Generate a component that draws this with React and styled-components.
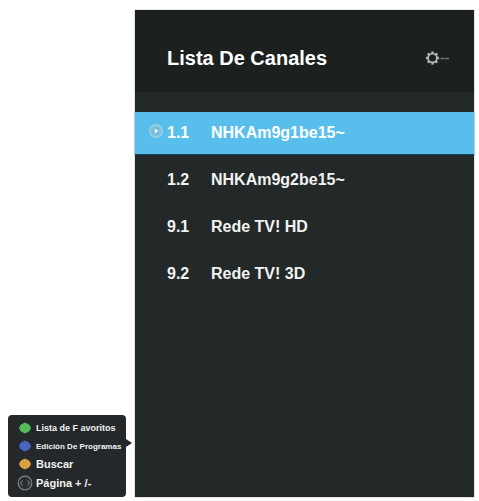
import React from "react";
import styled, { createGlobalStyle } from "styled-components";

const GlobalStyle = createGlobalStyle`
  * { box-sizing: border-box; }
  body {
    margin: 0;
    background: #fff;
    color: #f1f3f3;
    font-family: "Liberation Sans", Arial, sans-serif;
    font-weight: 700;
  }
  button {
    margin: 0;
    padding: 0;
    border: 0;
    background: none;
    color: inherit;
    font: inherit;
    text-align: left;
    cursor: pointer;
  }
`;

const Page = styled.main`
  display: grid;
  grid-template-columns: 126px 1fr;
  column-gap: 9px;
  min-height: 100vh;
  padding: 10px 5px 4px 0;
`;

const Legend = styled.aside`
  position: relative;
  align-self: end;
  display: flex;
  flex-direction: column;
  margin-left: 8px;
  padding: 4px 0 4px 8px;
  border-radius: 4px;
  background: #25282a;

  &::after {
    content: "";
    position: absolute;
    right: -6px;
    top: 24px;
    border: 4px solid transparent;
    border-left: 6px solid #25282a;
    border-right: 0;
  }
`;

const LegendItem = styled.button`
  display: grid;
  grid-template-columns: 20px auto;
  align-items: center;
  height: ${(p) => (p.$tall ? 20 : 18)}px;
  font-size: ${(p) => p.$size}px;
  white-space: nowrap;
`;

const LegendMark = styled.svg`
  display: block;
  width: 18px;
  height: 16px;
`;

const Panel = styled.section`
  display: flex;
  flex-direction: column;
  background: #232828;
  box-shadow: 0 0 1px #55595a;
`;

const Header = styled.header`
  display: flex;
  align-items: center;
  justify-content: space-between;
  height: 82px;
  padding: 14px 24px 0 32px;
  background: #1c201f;
`;

const Title = styled.h1`
  margin: 0;
  color: #fff;
  font-size: 20px;
  line-height: 24px;
`;

const SettingsButton = styled.button`
  display: flex;
`;

const ChannelList = styled.ul`
  display: flex;
  flex-direction: column;
  gap: 5px;
  margin: 20px 0 0;
  padding: 0;
  list-style: none;
`;

const Channel = styled.button`
  display: grid;
  grid-template-columns: 18px 44px 1fr;
  align-items: center;
  width: 100%;
  height: 42px;
  padding-left: 14px;
  background: ${(p) => (p.$selected ? "#58bfed" : "transparent")};
  box-shadow: ${(p) => (p.$selected ? "0 1px 1px #17415a" : "none")};
  color: ${(p) => (p.$selected ? "#fff" : "#f1f3f3")};
  font-size: 16px;
`;

const ChannelText = styled.span`
  grid-column: ${(p) => p.$column};
`;

const channels = [
  { number: "1.1", name: "NHKAm9g1be15~", selected: true },
  { number: "1.2", name: "NHKAm9g2be15~" },
  { number: "9.1", name: "Rede TV! HD" },
  { number: "9.2", name: "Rede TV! 3D" },
];

const legend = [
  { label: "Lista de F avoritos", color: "#55bd58", size: 9 },
  { label: "Edición De Programas", color: "#4866bd", size: 8 },
  { label: "Buscar", color: "#dba043", size: 11 },
  { label: "Página + /-", size: 11, tall: true },
];

function PlayIcon() {
  return (
    <svg width="16" height="20" viewBox="0 0 16 20" aria-hidden="true">
      <circle cx="7" cy="8" r="6.2" fill="#6fc3e8" stroke="#9ccfe2" strokeWidth="1.5" />
      <circle cx="7" cy="8" r="4" fill="#72b6d2" stroke="#92c3d6" strokeWidth=".8" />
      <path d="M5.7 5.2 9.7 8 5.7 10.8z" fill="#e9f6fb" />
    </svg>
  );
}

function GearIcon() {
  const teeth = [0, 45, 90, 135, 180, 225, 270, 315];
  return (
    <svg width="25" height="16" viewBox="0 0 25 16" aria-hidden="true">
      <circle cx="7.5" cy="8" r="4.4" fill="none" stroke="#b3b6b6" strokeWidth="1.8" />
      {teeth.map((angle) => (
        <path key={angle} d="M6.3 1.4h2.4V3.5H6.3z" fill="#b3b6b6" transform={`rotate(${angle} 7.5 8)`} />
      ))}
      <path d="M15.5 8.5h4M20 8.5h4" stroke="#707474" strokeWidth="1.5" />
    </svg>
  );
}

function Mark({ color }) {
  return (
    <LegendMark viewBox="0 0 18 16" aria-hidden="true">
      {color ? (
        <path d="M9 3 13 5 14.5 8 13 11 9 13 5 11 3.5 8 5 5z" fill={color} stroke={color} strokeLinejoin="round" />
      ) : (
        <>
          <circle cx="9" cy="8" r="6.8" fill="#292d2f" stroke="#7f8484" strokeWidth="1.2" />
          <path d="M6.5 5.5 4.5 8l2 2.5M11.5 5.5l2 2.5-2 2.5" fill="none" stroke="#8b9090" strokeWidth="1" />
        </>
      )}
    </LegendMark>
  );
}

export default function App() {
  return (
    <>
      <GlobalStyle />
      <Page>
        <Legend>
          {legend.map((item) => (
            <LegendItem key={item.label} type="button" $size={item.size} $tall={item.tall}>
              <Mark color={item.color} />
              <span>{item.label}</span>
            </LegendItem>
          ))}
        </Legend>
        <Panel>
          <Header>
            <Title>Lista De Canales</Title>
            <SettingsButton type="button" aria-label="Ajustes">
              <GearIcon />
            </SettingsButton>
          </Header>
          <ChannelList>
            {channels.map((channel) => (
              <li key={channel.number}>
                <Channel type="button" $selected={channel.selected} aria-pressed={Boolean(channel.selected)}>
                  {channel.selected && <PlayIcon />}
                  <ChannelText $column={2}>{channel.number}</ChannelText>
                  <ChannelText $column={3}>{channel.name}</ChannelText>
                </Channel>
              </li>
            ))}
          </ChannelList>
        </Panel>
      </Page>
    </>
  );
}
